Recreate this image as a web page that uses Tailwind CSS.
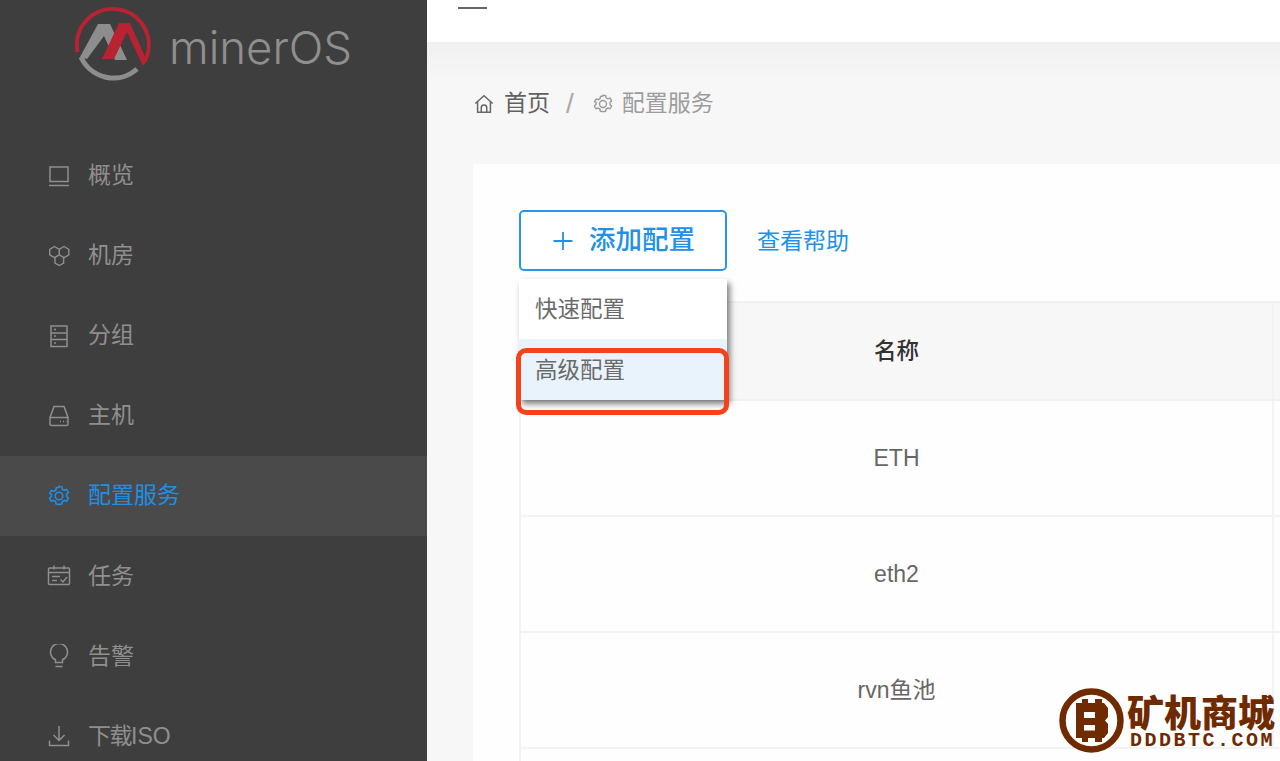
<!DOCTYPE html>
<html lang="zh"><head><meta charset="utf-8"><title>minerOS</title>
<script src="https://cdn.jsdelivr.net/npm/@tailwindcss/browser@4"></script></head>
<body class="m-0 overflow-hidden bg-[#f7f7f7]">
<div class="flex h-[761px] w-[1280px] overflow-hidden font-['Liberation_Sans','Noto_Sans_CJK_SC',sans-serif]">
<aside class="w-[427px] h-full shrink-0 bg-[#3e3e3e] overflow-hidden text-[#8f8f8f]">
 <div class="h-[136px] flex items-start pl-[75px] pt-[3px]">
  <svg class="w-[78px] h-[78px] shrink-0" viewBox="0 0 78 78" fill="none">
   <path d="M2.500 49 A36 36 0 1 1 70 58" stroke="#b92230" stroke-width="4"/>
   <path d="M6 54 A35.500 35.500 0 0 0 62 66" stroke="#8d8d8d" stroke-width="5"/>
   <path d="M5 54 L23 21 H35 L52 57 H40 L29 33 L12 56 Z" fill="#8d8d8d"/>
   <path d="M27 56 L44 20 H55 L72 58 L68 63 L52 29 L39 56 Z" fill="#b92230"/>
  </svg>
  <span class="ml-[16px] mt-[17px] text-[45.500px] leading-[56px] font-light text-[#8f8f8f] font-['Inter',sans-serif]">minerOS</span>
 </div>
 <nav class="flex flex-col text-[23px]">
  <a class="h-[80px] flex items-center pl-[47px] gap-[17px] pb-[1px]"><svg class="w-[24px] h-[24px]" viewBox="0 0 24 24" fill="none" stroke="currentColor" stroke-width="1.5"><rect x="3" y="3" width="18" height="14.500"/><path d="M2 21.500h20"/></svg><span>概览</span></a>
  <a class="h-[80px] flex items-center pl-[47px] gap-[17px] pb-[1px]"><svg class="w-[24px] h-[24px]" viewBox="0 0 24 24" fill="none" stroke="currentColor" stroke-width="1.4"><path d="M7.500 2.500l4.800 2.800v5.500l-4.800 2.800-4.800-2.800V5.300zM17 2.500l4.800 2.800v5.500L17 13.600l-4.800-2.800V5.300zM12.300 11l4.300 2.500v5.500l-4.300 2.500L8 19v-5.500z"/></svg><span>机房</span></a>
  <a class="h-[80px] flex items-center pl-[47px] gap-[17px] pb-[1px]"><svg class="w-[24px] h-[24px]" viewBox="0 0 24 24" fill="none" stroke="currentColor" stroke-width="1.5"><rect x="4" y="2" width="16" height="20.500"/><path d="M4 9h16M4 15.500h16M7 5.500h2M7 12h2M7 19h2"/></svg><span>分组</span></a>
  <a class="h-[80px] flex items-center pl-[47px] gap-[17px] pb-[1px]"><svg class="w-[24px] h-[24px]" viewBox="0 0 24 24" fill="none" stroke="currentColor" stroke-width="1.5"><path d="M7 2.500h10l4 11v6.500a1.500 1.500 0 0 1-1.500 1.500h-15A1.500 1.500 0 0 1 3 20v-6.500zM3 13.500h18M13 17.500h1M16 17.500h1M19 17.500h.5"/></svg><span>主机</span></a>
  <a class="h-[80px] flex items-center pl-[47px] gap-[17px] pb-[1px] bg-[#4a4a4a] text-[#1f8fe6]"><svg class="w-[24px] h-[24px]" viewBox="0 0 24 24" fill="none" stroke="currentColor" stroke-width="1.6"><path d="M12 2.300c1 0 2 .2 2.900.5l.5 2.400 1.900 1.100 2.300-.8a10 10 0 0 1 1.800 3.100l-1.800 1.600v2.300l1.800 1.600a10 10 0 0 1-1.800 3.100l-2.300-.8-1.900 1.100-.5 2.400a10 10 0 0 1-5.800 0l-.5-2.400-1.900-1.100-2.300.8a10 10 0 0 1-1.800-3.100l1.800-1.600v-2.300L2.800 9.600a10 10 0 0 1 1.800-3.100l2.300.8 1.900-1.100.5-2.400c.9-.3 1.700-.5 2.700-.5z"/><circle cx="12" cy="12" r="3.800"/></svg><span>配置服务</span></a>
  <a class="h-[80px] flex items-center pl-[47px] gap-[17px]"><svg class="w-[24px] h-[24px]" viewBox="0 0 24 24" fill="none" stroke="currentColor" stroke-width="1.5"><rect x="1.500" y="4" width="21" height="16.500" rx="1"/><path d="M1.500 8.500h21M7 1.500v4M17 1.500v4M5 12.500h8M5 16.500h5M13.500 15.500l2.500 2.500 4-5"/></svg><span>任务</span></a>
  <a class="h-[80px] flex items-center pl-[47px] gap-[17px]"><svg class="w-[24px] h-[24px]" viewBox="0 0 24 24" fill="none" stroke="currentColor" stroke-width="1.5"><path d="M8.500 18.500v-2.700A8.500 8.500 0 1 1 15.500 15.800v2.700zM8.500 22.500h7"/></svg><span>告警</span></a>
  <a class="h-[80px] flex items-center pl-[47px] gap-[17px]"><svg class="w-[24px] h-[24px]" viewBox="0 0 24 24" fill="none" stroke="currentColor" stroke-width="1.500"><path d="M12 2v14M6.500 11l5.500 5.500 5.500-5.500M2.500 16.500v5h19v-5"/></svg><span><span class="tracking-[-1.500px]">下载</span>ISO</span></a>
 </nav>
</aside>
<main class="flex-1 min-w-0 flex flex-col relative">
 <header class="h-[42px] bg-white shrink-0 pl-[31px] pt-[7px]"><div class="w-[29px] h-[2px] bg-[#666]"></div></header>
 <div class="flex-1 bg-gradient-to-b from-[#f0f0f0] to-[#f7f7f7] to-[40px] pl-[46px] overflow-hidden">
  <div class="h-[122px] flex items-center text-[23px] pt-[1px]">
   <svg class="w-[22px] h-[22px] text-[#666]" viewBox="0 0 24 24" fill="none" stroke="currentColor" stroke-width="1.600"><path d="M2.500 11.500L12 3l9.500 8.500M5 9.500V21h14V9.500M9 21v-5a3 3 0 0 1 6 0v5"/></svg>
   <span class="ml-[9px] text-[#616161]">首页</span>
   <span class="ml-[16px] text-[#a8a8a8] text-[28px] leading-none">/</span>
   <svg class="ml-[18px] w-[22px] h-[22px] text-[#9a9a9a]" viewBox="0 0 24 24" fill="none" stroke="currentColor" stroke-width="1.500"><path d="M12 2.300c1 0 2 .2 2.900.5l.5 2.400 1.900 1.100 2.300-.8a10 10 0 0 1 1.800 3.100l-1.800 1.600v2.300l1.800 1.600a10 10 0 0 1-1.800 3.100l-2.300-.8-1.900 1.100-.5 2.400a10 10 0 0 1-5.800 0l-.5-2.400-1.900-1.100-2.300.8a10 10 0 0 1-1.800-3.100l1.800-1.600v-2.300L2.800 9.600a10 10 0 0 1 1.800-3.100l2.300.8 1.900-1.100.5-2.400c.9-.3 1.700-.5 2.700-.5z"/><circle cx="12" cy="12" r="3.800"/></svg>
   <span class="ml-[8px] text-[#9c9c9c]">配置服务</span>
  </div>
  <section class="bg-[#fefefe] h-[600px] pl-[46px] pt-[46px] relative">
   <div class="flex items-center">
    <button class="w-[208px] h-[61px] border-2 border-[#2b95e9] rounded-[5px] flex items-center justify-center text-[#2191e8] text-[26.500px] font-medium bg-white pt-[1px]">
     <svg class="w-[24px] h-[24px] mr-[14px]" viewBox="0 0 24 24" fill="none" stroke="currentColor" stroke-width="1.800"><path d="M12 3v18M2.500 12h19"/></svg>添加配置</button>
    <span class="ml-[30px] mt-[2px] text-[23px] text-[#2191e8]">查看帮助</span>
   </div>
   <div class="mt-[30px] w-[800px] border-l-2 border-[#f2f2f2]">
    <div class="h-[100px] bg-[#f7f7f7] border-y-2 border-[#f1f1f1] flex items-stretch"><div class="w-[753px] border-r-2 border-[#f3f3f3] flex items-center justify-center text-[22.500px] font-medium text-[#333] pt-[2px]">名称</div></div>
    <div class="h-[116px] border-b-2 border-[#f3f3f3] flex items-stretch"><div class="w-[753px] border-r-2 border-[#f3f3f3] flex items-center justify-center text-[23px] text-[#666]">ETH</div></div>
    <div class="h-[116px] border-b-2 border-[#f3f3f3] flex items-stretch"><div class="w-[753px] border-r-2 border-[#f3f3f3] flex items-center justify-center text-[23px] text-[#666]">eth2</div></div>
    <div class="h-[116px] border-b-2 border-[#f3f3f3] flex items-stretch"><div class="w-[753px] border-r-2 border-[#f3f3f3] flex items-center justify-center text-[23px] text-[#666]">rvn鱼池</div></div>
    <div class="h-[40px]"></div>
   </div>
   <div class="absolute left-[46px] top-[115px] w-[208px] h-[121px] bg-white shadow-[3px_4px_6px_rgba(0,0,0,0.5)] text-[22.500px] text-[#6a6a6a]">
    <div class="h-[60px] flex items-center pl-[16px] pt-[2px]">快速配置</div>
    <div class="h-[61px] flex items-start pt-[16px] pl-[16px] bg-[#e8f3fc] leading-[32px]">高级配置</div>
   </div>
   <div class="absolute left-[43px] top-[184px] w-[213px] h-[67px] border-[5px] border-[#f4431c] rounded-[10px]"></div>
  </section>
 </div>
 <div class="absolute left-[632px] top-[688px] w-[221px] h-[66px] flex items-start">
  <svg class="w-[65px] h-[65px] shrink-0" viewBox="0 0 65 65"><circle cx="32.500" cy="32.500" r="29" fill="none" stroke="#6f2a00" stroke-width="6.500"/><path d="M17 15H23V11H29V15H36V11H43V15H45L49 20V29L46 32.500L49 36V45L45 50H43V54H36V50H29V54H23V50H17Z" fill="#6f2a00"/><path d="M25 24h11v6H25zM25 37h11v5.500H25z" fill="#fff"/></svg>
  <div class="ml-[3px] flex flex-col items-start">
   <span class="mt-[2px] text-[37px] leading-[42px] font-black text-[#6f2a00] whitespace-nowrap font-['Noto_Sans_CJK_SC',sans-serif]">矿机商城</span>
   <span class="ml-[3px] text-[20px] leading-[18px] font-bold text-[#6f2a00] tracking-[2.500px] font-['Liberation_Mono',monospace] whitespace-nowrap">DDDBTC.COM</span>
  </div>
 </div>
</main>
</div>
</body></html>
